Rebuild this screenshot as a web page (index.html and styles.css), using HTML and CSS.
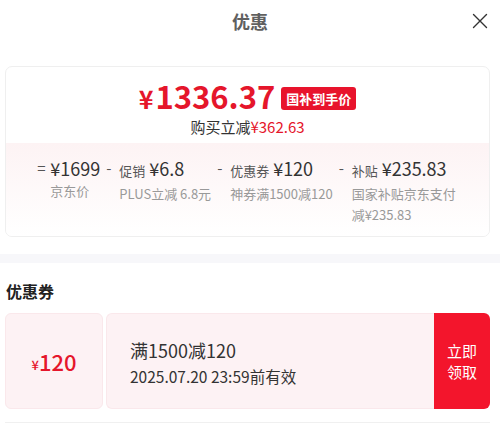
FILE: index.html
```html
<!DOCTYPE html>
<html lang="zh-CN">
<head>
    <meta charset="UTF-8">
    <meta name="viewport" content="width=device-width, initial-scale=1.0">
    <title>优惠</title>
    <link rel="stylesheet" href="styles.css">
</head>
<body>
    <div class="sheet">
        <div class="sheet-header">
            <div class="sheet-title">优惠</div>
            <button class="close-btn" aria-label="关闭">
                <svg width="16" height="16" viewBox="0 0 16 16">
                    <path d="M1.5 1.5 L14.5 14.5 M14.5 1.5 L1.5 14.5" stroke="#333" stroke-width="1.4" fill="none" stroke-linecap="round"/>
                </svg>
            </button>
        </div>

        <!-- 到手价 -->
        <div class="price-card">
            <div class="price-top">
                <div class="final-price">
                    <span class="price-num"><span class="yen">¥</span>1336.37</span>
                    <span class="price-tag">国补到手价</span>
                </div>
                <div class="save-line">购买立减<span class="red">¥362.63</span></div>
            </div>
            <div class="price-detail">
                <div class="detail-item">
                    <span class="sign">=</span>
                    <div class="detail-body">
                        <div class="detail-main">¥1699</div>
                        <div class="detail-sub">京东价</div>
                    </div>
                </div>
                <div class="detail-item">
                    <span class="sign">-</span>
                    <div class="detail-body">
                        <div class="detail-main"><span class="label">促销</span>¥6.8</div>
                        <div class="detail-sub">PLUS立减 6.8元</div>
                    </div>
                </div>
                <div class="detail-item">
                    <span class="sign">-</span>
                    <div class="detail-body">
                        <div class="detail-main"><span class="label">优惠券</span>¥120</div>
                        <div class="detail-sub">神券满1500减120</div>
                    </div>
                </div>
                <div class="detail-item">
                    <span class="sign">-</span>
                    <div class="detail-body narrow">
                        <div class="detail-main"><span class="label">补贴</span>¥235.83</div>
                        <div class="detail-sub">国家补贴京东支付减¥235.83</div>
                    </div>
                </div>
            </div>
        </div>

        <div class="gap-band"></div>

        <!-- 优惠券 -->
        <div class="section-title">优惠券</div>
        <div class="coupon">
            <div class="coupon-amount"><span class="yen-sm">¥</span>120</div>
            <div class="coupon-info">
                <div class="coupon-rule">满1500减120</div>
                <div class="coupon-date">2025.07.20 23:59前有效</div>
            </div>
            <button class="coupon-btn">立即<br>领取</button>
        </div>
        <div class="bottom-line"></div>
    </div>
</body>
</html>
```

FILE: styles.css
```css
body {
    margin: 0;
    background-color: #fff;
    font-family: "Noto Sans CJK SC", "Noto Sans", sans-serif;
    color: #333;
}

.sheet {
    width: 500px;
}

.sheet-header {
    position: relative;
    height: 42px;
    display: flex;
    justify-content: center;
    align-items: center;
}

.sheet-title {
    font-size: 18px;
    font-weight: bold;
    color: #606060;
}

.close-btn {
    position: absolute;
    right: 12px;
    top: 13px;
    padding: 0;
    border: none;
    background: none;
    width: 16px;
    height: 16px;
}

.price-card {
    margin: 24px 10px 0 5px;
    border: 1px solid #efefef;
    border-radius: 7px;
    overflow: hidden;
}

.price-top {
    padding: 11px 0 5px;
    text-align: center;
}

.final-price {
    display: flex;
    justify-content: center;
    align-items: center;
    gap: 6px;
    height: 38px;
}

.price-num {
    color: #e5162b;
    font-size: 31px;
    line-height: 38px;
    font-weight: bold;
}

.yen {
    font-size: 25px;
    margin-right: 2px;
}

.price-tag {
    background-color: #e8132c;
    color: #fff;
    font-size: 13px;
    font-weight: bold;
    line-height: 23px;
    padding: 0 5px;
    border-radius: 3px;
    margin-top: 2px;
}

.save-line {
    font-size: 15px;
    line-height: 22px;
    color: #333;
}

.red {
    color: #e5162b;
}

.price-detail {
    background: linear-gradient(180deg, #fdf3f4 0%, #fff 100%);
    display: flex;
    justify-content: center;
    gap: 6px;
    padding: 13px 0 11px;
}

.detail-item {
    display: flex;
    align-items: flex-start;
}

.sign {
    width: 13px;
    font-size: 15px;
    line-height: 24px;
    color: #555;
}

.detail-main {
    font-size: 18px;
    line-height: 24px;
    color: #333;
    white-space: nowrap;
}

.label {
    font-size: 13px;
    color: #555;
    margin-right: 4px;
}

.detail-sub {
    font-size: 13px;
    line-height: 21px;
    color: #999;
    white-space: nowrap;
}

.narrow .detail-sub {
    white-space: normal;
    width: 106px;
}

.gap-band {
    height: 9px;
    margin-top: 17px;
    background-color: #f7f7fa;
}

.section-title {
    font-size: 16px;
    font-weight: bold;
    color: #222;
    padding: 17px 0 0 6px;
    line-height: 22px;
}

.coupon {
    display: flex;
    margin: 11px 10px 0 5px;
    height: 96px;
}

.coupon-amount {
    width: 98px;
    background-color: #fdf2f4;
    border: 1px solid #fae8eb;
    border-radius: 6px;
    box-sizing: border-box;
    display: flex;
    justify-content: center;
    align-items: center;
    color: #e5162b;
    font-size: 22px;
    font-weight: 500;
}

.yen-sm {
    font-size: 13px;
    margin-top: 6px;
}

.coupon-info {
    flex: 1;
    margin-left: 3px;
    background-color: #fdf2f4;
    border: 1px solid #fae8eb;
    border-right: none;
    border-radius: 6px 0 0 6px;
    padding: 23px 0 0 23px;
}

.coupon-rule {
    font-size: 18px;
    line-height: 27px;
    color: #333;
}

.coupon-date {
    font-size: 15.5px;
    line-height: 25px;
    color: #333;
}

.coupon-btn {
    width: 56px;
    border: none;
    background-color: #f3152c;
    color: #fff;
    font-family: inherit;
    font-size: 15px;
    line-height: 21px;
    border-radius: 0 6px 6px 0;
    padding: 0;
}

.bottom-line {
    margin: 13px 10px 0 5px;
    height: 1px;
    background-color: #f0f0f0;
}
```
